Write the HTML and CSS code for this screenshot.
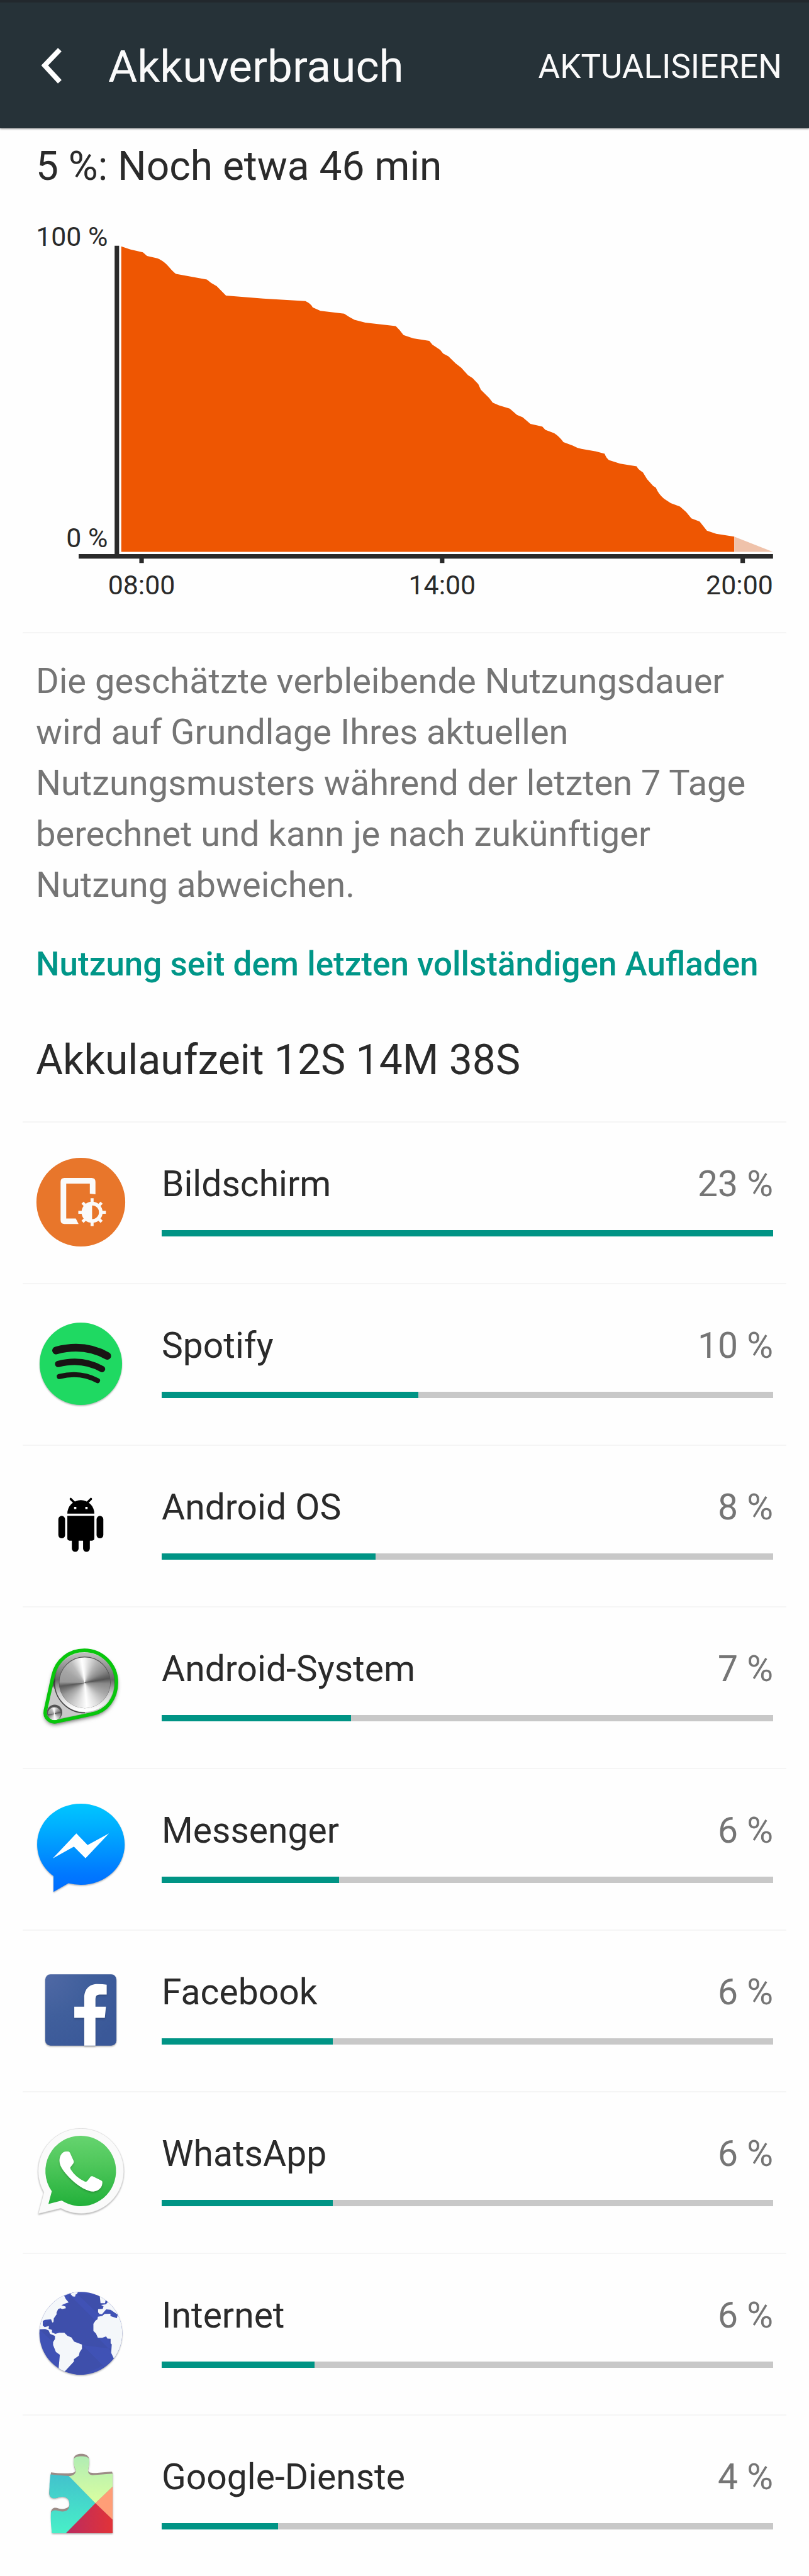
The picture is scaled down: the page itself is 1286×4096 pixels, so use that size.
FILE: index.html
```html
<!DOCTYPE html>
<html lang="de">
<head>
<meta charset="utf-8">
<meta name="viewport" content="width=device-width, initial-scale=1">
<title>Akkuverbrauch</title>
<link rel="stylesheet" href="styles.css">
</head>
<body>
<header class="bar">
  <button class="back" type="button" aria-label="Zurück">
    <svg viewBox="0 0 34 60" aria-hidden="true"><path d="M29 3 5 28 29 54" fill="none" stroke="#fff" stroke-width="8"/></svg>
  </button>
  <h1 class="title">Akkuverbrauch</h1>
  <button class="refresh" type="button">AKTUALISIEREN</button>
</header>
<main>
  <section class="history">
    <h2 class="status">5 %: Noch etwa 46 min</h2>
    <svg class="chart" viewBox="0 342 1440 784" role="img" aria-label="Akkustand im Zeitverlauf">
      <g transform="translate(0 380) scale(.9184 .4847)">
        <path fill="#ee5602" d="M235 1244V122L252 133 277 144 285 157 305 166Q318 176 328 199 336 217 341 223L401 244 409 256 420 268 438 303 510 314 592 323Q603 333 606 346L621 359 667 369Q678 383 687 392L708 402 767 415Q775 429 782 448L801 460 832 469 838 483 853 502 859 516 869 526 883 552 894 568 907 595 916 606 927 628 932 649 948 679 955 696 967 706 988 718 1002 741 1013 750 1028 774 1051 784 1057 796 1074 808Q1084 820 1092 841L1110 854Q1117 862 1127 866L1155 875 1172 884Q1174 897 1180 907L1202 920 1234 930Q1236 941 1246 952L1254 977 1266 1002 1271 1008Q1277 1034 1287 1049L1300 1065 1318 1078 1330 1098 1340 1121 1356 1133 1370 1166 1388 1178 1423 1188V1244Z"/>
        <path fill="#efc2aa" d="M1423 1188 1498 1244H1423Z"/>
      </g>
      <g fill="#2a2a2a">
        <path d="M204 438h8v549h-8zM140 987h1236v8H140zM248 995h8v8h-8zM783 995h8v8h-8zM1318 995h8v8h-8z"/>
        <g class="labels">
          <text x="192" y="438" text-anchor="end">100 %</text>
          <text x="192" y="975" text-anchor="end">0 %</text>
          <text x="252" y="1059" text-anchor="middle">08:00</text>
          <text x="787" y="1059" text-anchor="middle">14:00</text>
          <text x="1376" y="1059" text-anchor="end">20:00</text>
        </g>
      </g>
    </svg>
  </section>
  <section class="info">
    <p class="note">Die geschätzte verbleibende Nutzungsdauer wird auf Grundlage Ihres aktuellen Nutzungsmusters während der letzten 7 Tage berechnet und kann je nach zukünftiger Nutzung abweichen.</p>
    <h2 class="section">Nutzung seit dem letzten vollständigen Aufladen</h2>
    <p class="runtime">Akkulaufzeit 12S 14M 38S</p>
  </section>
  <ul class="apps">
    <li class="app">
      <svg class="icon" viewBox="0 0 160 160" aria-hidden="true">
        <circle cx="80" cy="80" r="79" fill="#e8762b"/>
        <path fill="#fafafa" d="M51 37H99Q106 37 106 44V66L96 65V47H54V109H71L76 119H51Q44 119 44 112V44Q44 37 51 37Z"/>
        <g fill="none" stroke="#fafafa"><circle cx="100" cy="98" r="15.5" stroke-width="6.5"/>
        <path stroke-width="5.4" d="M100 83V73M100 113V122.500M85 98H75.500M115 98H124.500M89 87 83 81M111 87 117 81M89 109 83 115M111 109 117 115"/></g>
        <path fill="#fafafa" d="M100 82a16 16 0 0 0 0 32z"/>
      </svg>
      <div class="usage"><label class="name" for="u1">Bildschirm</label><span class="pct">23 %</span><progress class="meter" id="u1" max="100" value="100"></progress></div>
    </li>
    <li class="app">
      <svg class="icon" viewBox="72 87 480 480" aria-hidden="true">
        <circle class="drop" cx="312" cy="327" r="220" fill="#1fd962"/>
        <g fill="none" stroke="#191414" stroke-linecap="round"><path stroke-width="41" d="M180 256Q330 216 453 285"/><path stroke-width="34" d="M191 328Q320 295 425 355"/><path stroke-width="27" d="M197 395Q310 367 401 417"/></g>
      </svg>
      <div class="usage"><label class="name" for="u2">Spotify</label><span class="pct">10 %</span><progress class="meter" id="u2" max="100" value="42"></progress></div>
    </li>
    <li class="app">
      <svg class="icon" viewBox="72 51 480 480" aria-hidden="true">
        <path d="M240 228a72 72 0 0 1 144 0zM240 240H384V360q0 12-12 12H360v42a18 18 0 0 1-36 0V372H300v42a18 18 0 0 1-36 0V372H252q-12 0-12-12z"/>
        <rect x="192" y="240" width="36" height="120" rx="18"/><rect x="396" y="240" width="36" height="120" rx="18"/>
        <path d="M258 150 280 172M366 150 344 172" stroke="#000" stroke-width="12" stroke-linecap="round"/>
        <path fill="#fff" d="M276 192h12v12h-12zM336 192h12v12h-12z"/>
      </svg>
      <div class="usage"><label class="name" for="u3">Android OS</label><span class="pct">8 %</span><progress class="meter" id="u3" max="100" value="35"></progress></div>
    </li>
    <li class="app">
      <svg class="icon" viewBox="72 75 480 480" aria-hidden="true">
        <defs>
          <linearGradient id="plate" x1="0" y1="0" x2="0" y2="1"><stop offset="0" stop-color="#ddd"/><stop offset=".25" stop-color="#888"/><stop offset=".45" stop-color="#333"/><stop offset=".56" stop-color="#999"/><stop offset=".75" stop-color="#ddd"/><stop offset="1" stop-color="#999"/></linearGradient>
          <linearGradient id="rim" x1="0" y1="0" x2="0" y2="1"><stop offset="0" stop-color="#bbb"/><stop offset=".45" stop-color="#666"/><stop offset=".7" stop-color="#ccc"/><stop offset="1" stop-color="#fff"/></linearGradient>
        </defs>
        <path class="deep" fill="url(#plate)" stroke="#0c0c0c" stroke-width="2" d="M165 250C185 170 250 119 331 119A171 171 0 0 1 502 290C502 375 450 445 370 459L185 499C150 507 115 480 123 440Z"/>
        <path fill="#c9c9c9" d="M163 310 133 430 210 480 340 454Q230 450 163 310Z"/>
        <path fill="none" stroke="#08c60c" stroke-width="19" stroke-linejoin="round" d="M165 250C185 170 250 119 331 119A171 171 0 0 1 502 290C502 375 450 445 370 459L185 499C150 507 115 480 123 440Z"/>
        <path d="M171 290A163 163 0 0 0 334 453" fill="none" stroke="#444" stroke-width="5"/>
        <circle cx="333" cy="290" r="147" fill="none" stroke="url(#rim)" stroke-width="22"/>
        <circle cx="333" cy="290" r="138" fill="#555"/>
        <foreignObject x="197" y="156" width="272" height="272"><div class="knob knob-large"></div></foreignObject>
        <circle cx="172" cy="450" r="41" fill="#555"/>
        <foreignObject x="136" y="422" width="70" height="70"><div class="knob knob-small"></div></foreignObject>
      </svg>
      <div class="usage"><label class="name" for="u4">Android-System</label><span class="pct">7 %</span><progress class="meter" id="u4" max="100" value="31"></progress></div>
    </li>
    <li class="app">
      <svg class="icon" viewBox="72 69 480 480" aria-hidden="true">
        <defs><linearGradient id="msg" x1="0" y1="0" x2="0" y2="1"><stop offset="0" stop-color="#00c6ff"/><stop offset=".25" stop-color="#00b0ff"/><stop offset=".8" stop-color="#0078ff"/><stop offset="1" stop-color="#006cff"/></linearGradient></defs>
        <path class="drop" fill="url(#msg)" d="M312 69C442 69 546 165 546 286S442 502 312 502Q278 502 246 494L166 540V455C112 415 79 355 79 286 79 165 182 69 312 69Z"/>
        <path fill="#fff" d="M162 361 288 228 348 290 462 228 337 360 275 298Z"/>
      </svg>
      <div class="usage"><label class="name" for="u5">Messenger</label><span class="pct">6 %</span><progress class="meter" id="u5" max="100" value="29"></progress></div>
    </li>
    <li class="app">
      <svg class="icon" viewBox="72 61 480 480" aria-hidden="true">
        <defs><radialGradient id="fb" cx="0" cy="0" r="1.200"><stop offset="0" stop-color="#5069a5"/><stop offset=".5" stop-color="#405f9c"/><stop offset="1" stop-color="#3a5898"/></radialGradient></defs>
        <rect class="drop" x="122" y="109" width="380" height="381" rx="28" fill="url(#fb)"/>
        <path class="soft" fill="#fff" d="M330 490V341H277V282H330V236C330 185 360 161 402 161Q430 161 450 164V217H412Q390 217 390 240V282H446L440 341H390V490Z"/>
      </svg>
      <div class="usage"><label class="name" for="u6">Facebook</label><span class="pct">6 %</span><progress class="meter" id="u6" max="100" value="28"></progress></div>
    </li>
    <li class="app">
      <svg class="icon" viewBox="72 85 480 480" aria-hidden="true">
        <defs><linearGradient id="wa" x1="0" y1="0" x2="0" y2="1"><stop offset="0" stop-color="#66d46f"/><stop offset=".4" stop-color="#4fc75b"/><stop offset="1" stop-color="#22b03a"/></linearGradient></defs>
        <path class="drop" fill="#fafafa" stroke="#d5d5d5" stroke-width="2" d="M312 93A227 227 0 1 1 205 519L85 548 115 434A227 227 0 0 1 312 93Z"/>
        <path fill="url(#wa)" d="M312 132A188 188 0 1 1 210 478L139 496 157 428A188 188 0 0 1 312 132Z"/>
        <path class="soft" fill="#fff" d="M232 216H244Q250 216 254 223L274 267Q276 273 272 280L256 301Q254 305 259 313 286 355 333 376 340 379 346 374L364 350Q368 346 374 348L420 370Q426 373 427 378C428 410 407 426 380 430 350 431 297 401 262 366 230 334 198 300 198 266 198 240 210 219 232 216Z"/>
      </svg>
      <div class="usage"><label class="name" for="u7">WhatsApp</label><span class="pct">6 %</span><progress class="meter" id="u7" max="100" value="28"></progress></div>
    </li>
    <li class="app">
      <svg class="icon" viewBox="72 79 480 480" aria-hidden="true">
        <defs><clipPath id="globe"><circle cx="312" cy="318" r="221"/></clipPath></defs>
        <circle class="drop" cx="312" cy="318" r="221" fill="#4052b5"/>
        <g clip-path="url(#globe)">
          <path fill="#3e4fab" d="M250 110 410 270 380 310 410 345 460 345 475 400 318 380 280 360 200 310 160 300 110 270 160 240 190 190 230 180 250 150ZM290 105 405 215 430 160 410 115ZM318 378 430 490 312 545 230 520 275 460ZM405 343 480 420 470 345ZM92 298 170 370 170 330 130 300Z"/>
          <path fill="#f4f7fa" d="M80 90H260L252 106 223 117 232 135 247 153 231 158 208 168 230 175 232 184 212 188 203 184 191 188 182 208 183 216 168 238 166 258 160 260 153 243 120 246 109 252V276L119 285 142 279 140 294 158 300V313L176 321 197 315H224L240 331 262 340 276 362 318 378V400L306 418 301 437 275 456V468L226 521 190 545 200 432 179 417 164 380V364L174 348V332L148 321 140 302 122 295 80 297ZM255 106 300 90 291 108 285 109 281 122 269 121ZM412 110 440 100 444 142 441 157H417ZM456 150 560 150V420L487 450 474 422 477 376 471 372V347L454 346 447 334 426 342H403L393 319 379 305V267L390 250 401 243 403 229 426 225 439 214 470 213V226L504 237 509 218 471 192 447 190 435 204 425 216 412 215 404 206V189L429 187 433 174 420 166 446 163Z"/>
        </g>
      </svg>
      <div class="usage"><label class="name" for="u8">Internet</label><span class="pct">6 %</span><progress class="meter" id="u8" max="100" value="25"></progress></div>
    </li>
    <li class="app">
      <svg class="icon" viewBox="0 0 480 480" aria-hidden="true">
        <defs>
          <clipPath id="piece"><path d="M112 202Q152 207 184 211C204 210 216 195 212 178Q204 155 204 125C204 98 267 98 267 125Q266 155 262 178C260 198 270 207 284 206L360 198V516H118Q111 450 114 405C120 392 132 392 145 397 168 406 188 397 188 362 188 327 170 316 145 324 125 335 107 329 107 300Q107 250 112 202Z"/></clipPath>
          <linearGradient id="teal" x1="0" y1="0" x2="0" y2="1"><stop offset="0" stop-color="#42c0cd"/><stop offset="1" stop-color="#48f0c8"/></linearGradient>
          <linearGradient id="lime" x1="0" y1="0" x2="0" y2="1"><stop offset="0" stop-color="#aeebb5"/><stop offset="1" stop-color="#daffa0"/></linearGradient>
          <linearGradient id="red" x1="0" y1="0" x2="1" y2="0"><stop offset="0" stop-color="#b92b60"/><stop offset="1" stop-color="#e23338"/></linearGradient>
        </defs>
        <g transform="translate(-72 -73) scale(1.3393 1)">
          <path class="drop" fill="#9c8b86" d="M114 191Q150 198 184 196C204 196 216 188 211 178 203 150 204 125 206 112 212 86 257 86 264 112 268 125 266 155 262 178 260 194 280 196 300 194L357 187 360 198V516H118L114 400C120 376 132 378 145 384 168 392 188 380 188 362 188 327 170 316 145 324 125 335 107 329 107 300Z"/>
          <g clip-path="url(#piece)">
            <path fill="url(#teal)" d="M90 190H172L291 356 174 518H90Z"/>
            <path fill="url(#lime)" d="M180 90H370V254L291 356 170 190Z"/>
            <path fill="#ff9e77" d="M361 266V446L291 356Z"/>
            <path fill="url(#red)" d="M291 356 361 446V518H172Z"/>
          </g>
        </g>
      </svg>
      <div class="usage"><label class="name" for="u9">Google-Dienste</label><span class="pct">4 %</span><progress class="meter" id="u9" max="100" value="19"></progress></div>
    </li>
  </ul>
</main>
</body>
</html>
```
FILE: styles.css
```css
* { box-sizing: border-box; }
body {
  margin: 0;
  background: #fefefe;
  color: #2a2a2a;
  font-family: Roboto, "Noto Sans", sans-serif;
}
h1, h2, p, ul { margin: 0; padding: 0; font-weight: 400; }
button { border: 0; padding: 0; background: none; color: inherit; font: inherit; }

.bar {
  display: flex;
  align-items: center;
  height: 204px;
  padding: 4px 43px 0 66px;
  border-top: 4px solid #22282d;
  background: #263238;
  color: #fafafa;
  box-shadow: 0 1px 3px rgba(0, 0, 0, .4);
}
.back { width: 34px; height: 60px; }
.back svg { display: block; width: 34px; height: 60px; }
.title { flex: 1; margin-left: 72px; font-size: 71px; line-height: 84px; }
.refresh { font-size: 53px; line-height: 64px; }

.status { padding: 21px 57px 0; font-size: 64px; line-height: 80px; }
.chart { display: block; width: 100%; height: auto; }
.labels { font-size: 48px; }

.info { margin: 0 36px; padding: 36px 21px 57px; border-top: 2px solid #f5f5f5; }
.note { color: #757575; font-size: 56px; line-height: 81px; }
.section { margin-top: 53px; color: #009688; font-size: 53px; font-weight: 500; line-height: 64px; white-space: nowrap; }
.runtime { margin-top: 81px; font-size: 66px; line-height: 80px; }

.apps { list-style: none; }
.app {
  display: flex;
  gap: 57px;
  height: 257px;
  margin: 0 36px;
  padding: 55px 21px 0;
  border-top: 2px solid #f5f5f5;
}
.icon { flex: none; width: 143px; height: 143px; overflow: visible; }
.usage {
  flex: 1;
  display: grid;
  grid-template-columns: 1fr auto;
  grid-template-rows: 64px 10px;
  row-gap: 41px;
  padding-top: 11px;
  font-size: 57px;
  line-height: 64px;
}
.pct { color: #757575; }
.meter {
  grid-column: 1 / -1;
  display: block;
  width: 100%;
  height: 10px;
  border: 0;
  appearance: none;
  background: #c8c8c8;
}
.meter::-webkit-progress-bar { background: #c8c8c8; }
.meter::-webkit-progress-value { background: #009485; }
.meter::-moz-progress-bar { background: #009485; }

.drop { filter: drop-shadow(0 5px 4px rgba(0, 0, 0, .3)); }
.soft { filter: drop-shadow(0 6px 5px rgba(0, 0, 0, .2)); }
.deep { filter: drop-shadow(0 12px 12px rgba(0, 0, 0, .7)); }
.knob {
  border-radius: 50%;
  background: conic-gradient(#f4f4f4, #b5b5b5 30deg, #888 60deg, #555 80deg, #888 92deg, #aaa 120deg, #ddd 150deg, #fff 175deg, #ccc 210deg, #999 240deg, #5a5a5a 262deg, #999 272deg, #a5a5a5 300deg, #bbb 325deg, #fff 352deg, #f4f4f4);
}
.knob-large { width: 272px; height: 272px; }
.knob-small { width: 70px; height: 70px; }
```
